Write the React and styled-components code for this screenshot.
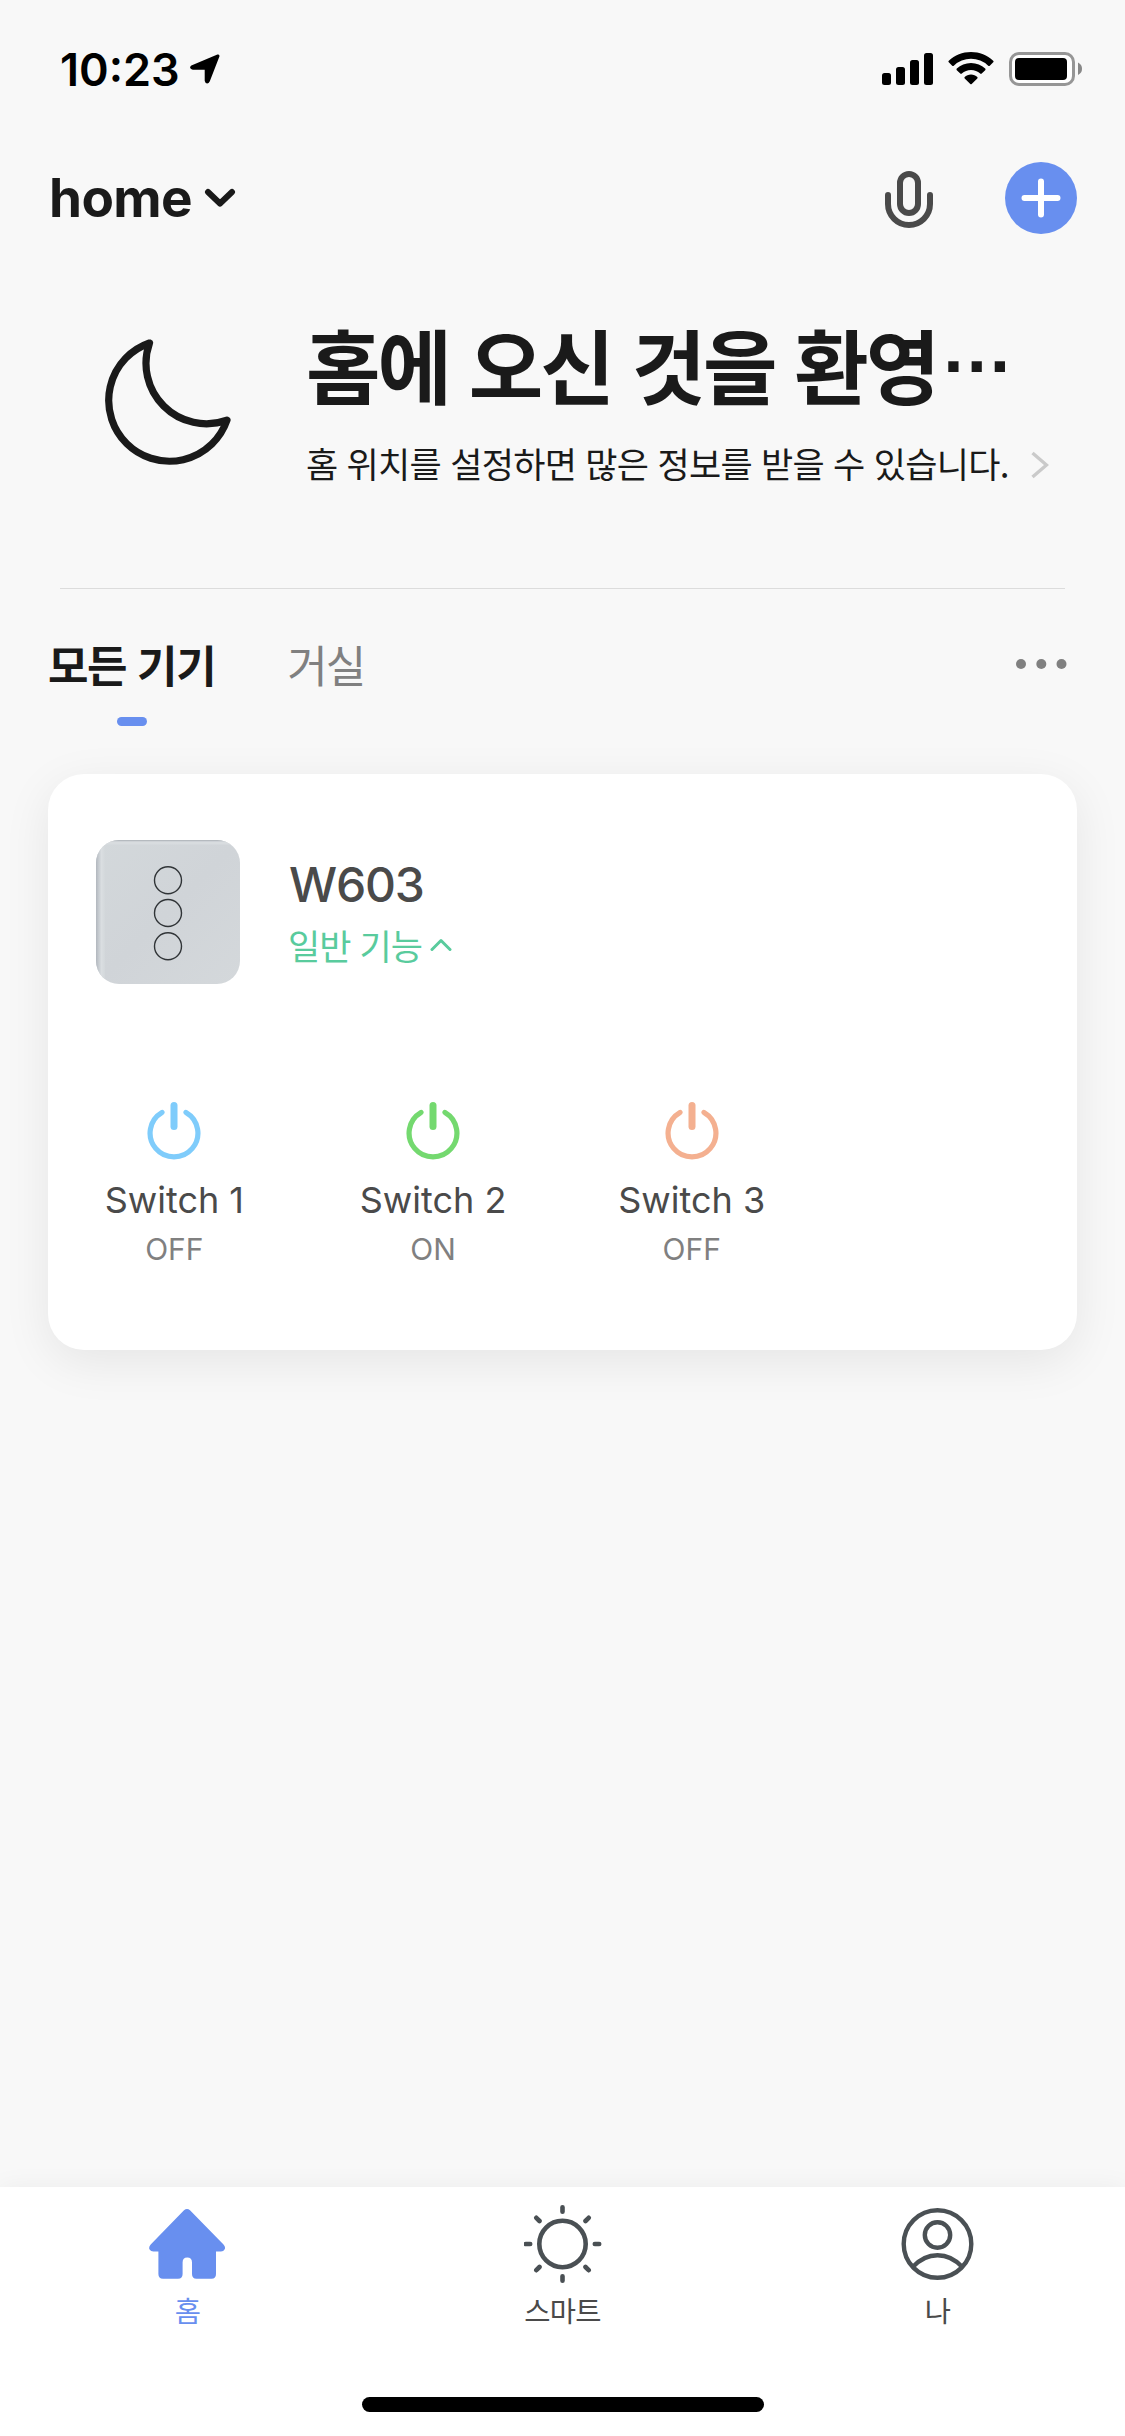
import styled, { createGlobalStyle } from "styled-components"

const switches = [
  { name: "Switch 1", state: "OFF", color: "#7fccfb" },
  { name: "Switch 2", state: "ON", color: "#74d96f" },
  { name: "Switch 3", state: "OFF", color: "#f4b090" },
]

export default function App() {
  return (
    <Screen lang="ko">
      <GlobalStyle />
      <StatusBar />
      <Header>
        <HomeName>home</HomeName>
        <svg width="32" height="20" viewBox="0 0 32 20" fill="none" stroke="#1a1a1a" strokeWidth="6" strokeLinecap="round" strokeLinejoin="round">
          <path d="M4 4L16 15.5L28 4" />
        </svg>
        <HeaderActions>
          <MicIcon width="48" height="58" viewBox="0 0 48 58" fill="none" stroke="#4a4a4a" strokeWidth="6" strokeLinecap="round">
            <rect x="15" y="3" width="18" height="39" rx="9" />
            <path d="M3 24V33A21 21 0 0 0 45 33V24" />
          </MicIcon>
          <AddButton>
            <svg width="40" height="40" viewBox="0 0 40 40" stroke="#fff" strokeWidth="6" strokeLinecap="round">
              <path d="M20 3.5V36.5M3.5 20H36.5" />
            </svg>
          </AddButton>
        </HeaderActions>
      </Header>

      <Welcome>
        <svg width="126" height="126" viewBox="0 0 126 126" fill="none" stroke="#1a1a1a" strokeWidth="7.2" strokeLinejoin="round">
          <path d="M44.5 4A60.8 60.8 0 1 0 122 81.2A60.5 60.5 0 0 1 44.5 4Z" />
        </svg>
        <WelcomeText>
          <h1>홈에 오신 것을 환영<Dots>…</Dots></h1>
          <div>
            <p>홈 위치를 설정하면 많은 정보를 받을 수 있습니다.</p>
            <svg width="18" height="28" viewBox="0 0 18 28" fill="none" stroke="#cacaca" strokeWidth="3.4">
              <path d="M1.5 2L15.5 14L1.5 26" />
            </svg>
          </div>
        </WelcomeText>
      </Welcome>
      <Divider />

      <Rooms>
        <Room $active>모든 기기</Room>
        <Room>거실</Room>
        <svg width="51" height="10" viewBox="0 0 51 10" fill="#808080">
          <circle cx="5" cy="5" r="5" />
          <circle cx="25.3" cy="5" r="5" />
          <circle cx="45.5" cy="5" r="5" />
        </svg>
      </Rooms>

      <Card>
        <Device>
          <DeviceImage />
          <div>
            <DeviceName>W603</DeviceName>
            <DeviceMore>
              일반 기능
              <svg width="22" height="14" viewBox="0 0 22 14" fill="none" stroke="#59cb9d" strokeWidth="3" strokeLinecap="round" strokeLinejoin="round">
                <path d="M2 11.5L11 2.5L20 11.5" />
              </svg>
            </DeviceMore>
          </div>
        </Device>
        <Switches>
          {switches.map((s) => (
            <SwitchItem key={s.name}>
              <svg width="54" height="60" viewBox="0 0 54 60" fill="none" stroke={s.color} strokeLinecap="round">
                <path d="M27 5.5V26.5" strokeWidth="7" />
                <path d="M15 12.4A23.9 23.9 0 1 0 39 12.4" strokeWidth="5.2" />
              </svg>
              <strong>{s.name}</strong>
              <span>{s.state}</span>
            </SwitchItem>
          ))}
        </Switches>
      </Card>

      <TabBar>
        <Tabs>
          <Tab $active>
            <svg width="78" height="78" viewBox="1 0 78 78" fill="#688fef">
              <path d="M36 5.2Q39 2.8 42 5.2L75.5 39.5Q78 42.3 76.5 44.6Q75.5 46.5 73 46.5H68V69Q68 73.7 63.5 73.7H48.5Q44 73.7 44 69V57.5Q44 52.5 39.2 52.5Q34.6 52.5 34.6 57.5V69Q34.6 73.7 30 73.7H15Q10.4 73.7 10.4 69V46.5H5.5Q2.7 46.5 1.6 44.6Q.3 42.3 2.7 39.5Z" />
            </svg>
            홈
          </Tab>
          <Tab>
            <svg width="78" height="78" viewBox="0.5 0 78 78" fill="none" stroke="#4a5054" strokeWidth="4.6" strokeLinecap="round">
              <circle cx="39" cy="39" r="23.2" />
              <path d="M39 2.3V6.7M39 71.3V75.7M2.3 39H6.7M71.3 39H75.7M12.8 12.8L16 16M62 62L65.2 65.2M65.2 12.8L62 16M16 62L12.8 65.2" />
            </svg>
            스마트
          </Tab>
          <Tab>
            <svg width="78" height="78" viewBox="0.5 0 78 78" fill="none" stroke="#4a5054" strokeWidth="4.4">
              <circle cx="39" cy="39" r="33.8" />
              <circle cx="39" cy="30" r="12.7" />
              <path d="M14.2 62Q25 50.2 39 50.2T63.8 62" />
            </svg>
            나
          </Tab>
        </Tabs>
        <HomeIndicator />
      </TabBar>
    </Screen>
  )
}

function StatusBar() {
  return (
    <StatusContainer>
      <time>10:23</time>
      <svg width="30" height="30" viewBox="0 0 30 30" fill="#000" stroke="#000" strokeWidth="3" strokeLinejoin="round">
        <path d="M28 2L18.5 26.5Q17 29.5 16.2 26.5V14.2H3Q.5 13.8 2.5 12.6Z" />
      </svg>
      <StatusIcons>
        <svg width="51" height="34" viewBox="0 0 51 34">
          <rect x="0" y="21" width="9" height="12" rx="2.5" />
          <rect x="14" y="15" width="9" height="18" rx="2.5" />
          <rect x="28" y="8" width="9" height="25" rx="2.5" />
          <rect x="42" y="1" width="9" height="32" rx="2.5" />
        </svg>
        <svg width="46" height="34" viewBox="0 0 46 34">
          <path d="M23 0C14.5 0 6.7 3.2 .8 8.7Q0 9.5 .8 10.3L4.2 13.7Q5 14.4 5.8 13.7A25 25 0 0 1 40.2 13.7Q41 14.4 41.8 13.7L45.2 10.3Q46 9.5 45.2 8.7C39.3 3.2 31.5 0 23 0Z" />
          <path d="M23 11C17.5 11 12.5 13.1 8.8 16.6Q8 17.4 8.8 18.2L12.3 21.6Q13 22.3 13.8 21.6A13.6 13.6 0 0 1 32.2 21.6Q33 22.3 33.7 21.6L37.2 18.2Q38 17.4 37.2 16.6C33.5 13.1 28.5 11 23 11Z" />
          <path d="M23 22.5C20.5 22.5 18.3 23.5 16.7 24.9Q16 25.7 16.7 26.4L22.3 32Q23 32.7 23.7 32L29.3 26.4Q30 25.7 29.3 24.9C27.7 23.5 25.5 22.5 23 22.5Z" />
        </svg>
        <svg width="74" height="34" viewBox="0 0 74 34">
          <rect x="1.5" y="1.5" width="63" height="31" rx="8.5" fill="#fff" stroke="#969696" strokeWidth="3" />
          <rect x="6" y="6" width="52" height="22" rx="4" />
          <path d="M69 10.5Q73 12.5 73 16.8T69 23Z" fill="#888" />
        </svg>
      </StatusIcons>
    </StatusContainer>
  )
}

function DeviceImage() {
  return (
    <svg width="144" height="144" viewBox="0 0 144 144">
      <defs>
        <linearGradient id="glass" x1="0" y1="0" x2="1" y2="1">
          <stop offset="0" stopColor="#d3d8db" />
          <stop offset=".5" stopColor="#d0d4d8" />
          <stop offset="1" stopColor="#d4d8db" />
        </linearGradient>
        <linearGradient id="edge" x1="0" x2="1">
          <stop offset="0" stopColor="#b2b7be" />
          <stop offset=".3" stopColor="#c6cbd0" />
          <stop offset=".6" stopColor="#dadee1" />
          <stop offset="1" stopColor="#d3d8db" />
        </linearGradient>
        <clipPath id="plate">
          <rect width="144" height="144" rx="23" />
        </clipPath>
      </defs>
      <g clipPath="url(#plate)">
        <rect width="144" height="144" fill="url(#glass)" />
        <rect width="9" height="144" fill="url(#edge)" />
        <rect width="144" height="1.5" fill="#b5babf" />
        <rect x="4" y="1.5" width="140" height="3" fill="#d8dcdf" />
      </g>
      <g fill="none" stroke="#303437" strokeWidth="1.4">
        <circle cx="72" cy="40.3" r="13.5" />
        <circle cx="72" cy="73" r="13.5" />
        <circle cx="72" cy="106.3" r="13.5" />
      </g>
    </svg>
  )
}

const GlobalStyle = createGlobalStyle`
  * {
    box-sizing: border-box;
    margin: 0;
    padding: 0;
  }
  body {
    background-color: #f8f8f8;
    font-family: Inter, "Noto Sans CJK KR", sans-serif;
  }
  svg {
    display: block;
    flex-shrink: 0;
  }
`
const Screen = styled.div`
  width: 1125px;
  height: 2436px;
  display: flex;
  flex-direction: column;
  background-color: #f8f8f8;
  color: #1a1a1a;
  overflow: hidden;
`
const StatusContainer = styled.div`
  height: 138px;
  flex-shrink: 0;
  display: flex;
  align-items: center;
  padding: 0 42px 0 60px;
  time {
    width: 130px;
    font-size: 45px;
    font-weight: 600;
    color: #000;
  }
`
const StatusIcons = styled.div`
  margin-left: auto;
  display: flex;
  gap: 15px;
`
const Header = styled.header`
  height: 120px;
  flex-shrink: 0;
  display: flex;
  align-items: center;
  padding: 0 48px 0 49px;
`
const HomeName = styled.h2`
  width: 155px;
  font-size: 53px;
  font-weight: 700;
  line-height: 72px;
  letter-spacing: -0.6px;
`
const HeaderActions = styled.div`
  margin-left: auto;
  display: flex;
  align-items: center;
  gap: 72px;
`
const MicIcon = styled.svg`
  margin-top: 4px;
`
const AddButton = styled.button`
  width: 72px;
  height: 72px;
  display: flex;
  align-items: center;
  justify-content: center;
  border: none;
  border-radius: 50%;
  background-color: #688fef;
`
const Welcome = styled.section`
  height: 330px;
  flex-shrink: 0;
  display: flex;
  align-items: flex-start;
  gap: 75px;
  padding: 81px 60px 0 105px;
`
const WelcomeText = styled.div`
  margin-top: -35px;
  h1 {
    height: 118px;
    font-family: "Noto Sans CJK KR", sans-serif;
    font-size: 81px;
    line-height: 118px;
    font-weight: 700;
    letter-spacing: -3px;
    white-space: nowrap;
  }
  div {
    display: flex;
    align-items: center;
    height: 86px;
  }
  p {
    width: 725px;
    margin-top: -6px;
    font-family: "Noto Sans CJK KR", sans-serif;
    font-size: 35px;
    letter-spacing: -0.7px;
    white-space: nowrap;
  }
`
// the ellipsis sits at mid height, not on the baseline
const Dots = styled.span`
  margin-left: 3px;
  font-family: "Liberation Sans", sans-serif;
  font-size: 73px;
  line-height: 0;
  letter-spacing: 0;
  vertical-align: 26px;
`
const Divider = styled.hr`
  height: 1px;
  flex-shrink: 0;
  margin: 0 60px;
  border: none;
  background-color: #dcdcdc;
`
const Rooms = styled.nav`
  height: 185px;
  flex-shrink: 0;
  display: flex;
  align-items: flex-start;
  padding: 45px 58px 0 48px;
  svg {
    margin: 25px 0 0 auto;
  }
`
const Room = styled.div`
  display: flex;
  flex-direction: column;
  align-items: center;
  margin-right: 72px;
  font-family: "Noto Sans CJK KR", sans-serif;
  font-size: 44px;
  line-height: 60px;
  font-weight: ${(props) => (props.$active ? 700 : 400)};
  letter-spacing: ${(props) => (props.$active ? "-1.4px" : "-2px")};
  color: ${(props) => (props.$active ? "#1a1a1a" : "#808080")};
  &::after {
    content: "";
    width: 30px;
    height: 9px;
    margin-top: 23px;
    border-radius: 4.5px;
    background-color: ${(props) => (props.$active ? "#688fef" : "transparent")};
  }
`
const Card = styled.section`
  height: 576px;
  flex-shrink: 0;
  margin: 0 48px;
  padding: 66px 0 0 48px;
  border-radius: 36px;
  background-color: #fff;
  box-shadow: 0 12px 48px rgba(0, 0, 0, 0.08);
`
const Device = styled.div`
  display: flex;
  gap: 48px;
  height: 260px;
`
const DeviceName = styled.h3`
  margin-top: 15px;
  padding-left: 1px;
  font-size: 48px;
  line-height: 60px;
  font-weight: 500;
  letter-spacing: -1.2px;
  color: #4a4a4a;
`
const DeviceMore = styled.div`
  display: flex;
  align-items: center;
  gap: 8px;
  font-family: "Noto Sans CJK KR", sans-serif;
  font-size: 35px;
  line-height: 60px;
  letter-spacing: -0.9px;
  color: #59cb9d;
`
const Switches = styled.div`
  display: flex;
  margin-left: -51px;
`
const SwitchItem = styled.div`
  width: 258.7px;
  display: flex;
  flex-direction: column;
  align-items: center;
  strong {
    margin-top: 18px;
    font-size: 36px;
    line-height: 44px;
    font-weight: 400;
    color: #4a4a4a;
  }
  span {
    margin-top: 9px;
    font-size: 30px;
    line-height: 36px;
    color: #808080;
  }
`
const TabBar = styled.footer`
  height: 249px;
  flex-shrink: 0;
  margin-top: auto;
  display: flex;
  flex-direction: column;
  background-color: #fff;
  box-shadow: 0 0 24px rgba(0, 0, 0, 0.05);
`
const Tabs = styled.div`
  height: 210px;
  display: flex;
`
const Tab = styled.div`
  flex: 1;
  display: flex;
  flex-direction: column;
  align-items: center;
  padding-top: 18px;
  font-family: "Noto Sans CJK KR", sans-serif;
  font-size: 28.5px;
  line-height: 53px;
  letter-spacing: -0.7px;
  color: ${(props) => (props.$active ? "#688fef" : "#4a4a4a")};
`
const HomeIndicator = styled.div`
  width: 402px;
  height: 15px;
  margin: 0 auto;
  border-radius: 7.5px;
  background-color: #000;
`
